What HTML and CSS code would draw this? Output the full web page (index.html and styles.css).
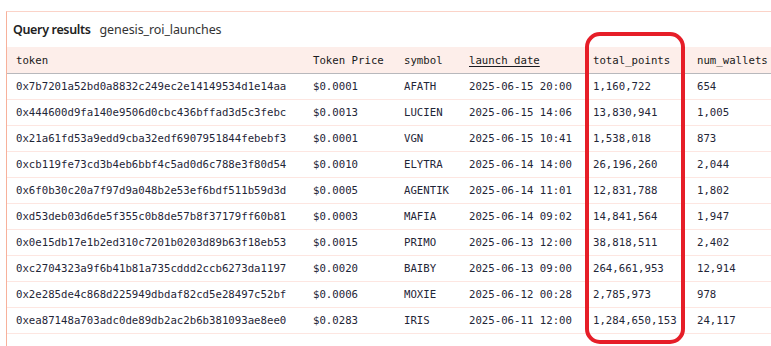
FILE: index.html
```html
<!DOCTYPE html>
<html lang="en">
<head>
    <meta charset="UTF-8">
    <meta name="viewport" content="width=device-width, initial-scale=1.0">
    <title>Query results</title>
    <link rel="stylesheet" href="styles.css">
</head>
<body>
    <div class="panel">
        <div class="panel-title">
            <strong>Query results</strong>
            <span class="query-name">genesis_roi_launches</span>
        </div>

        <table class="results">
            <colgroup>
                <col class="col-token">
                <col class="col-price">
                <col class="col-symbol">
                <col class="col-date">
                <col class="col-points">
                <col class="col-wallets">
            </colgroup>
            <thead>
                <tr>
                    <th>token</th>
                    <th>Token Price</th>
                    <th>symbol</th>
                    <th><span class="sorted">launch_date</span></th>
                    <th>total_points</th>
                    <th>num_wallets</th>
                </tr>
            </thead>
            <tbody>
                <tr><td>0x7b7201a52bd0a8832c249ec2e14149534d1e14aa</td><td>$0.0001</td><td>AFATH</td><td>2025-06-15 20:00</td><td>1,160,722</td><td>654</td></tr>
                <tr><td>0x444600d9fa140e9506d0cbc436bffad3d5c3febc</td><td>$0.0013</td><td>LUCIEN</td><td>2025-06-15 14:06</td><td>13,830,941</td><td>1,005</td></tr>
                <tr><td>0x21a61fd53a9edd9cba32edf6907951844febebf3</td><td>$0.0001</td><td>VGN</td><td>2025-06-15 10:41</td><td>1,538,018</td><td>873</td></tr>
                <tr><td>0xcb119fe73cd3b4eb6bbf4c5ad0d6c788e3f80d54</td><td>$0.0010</td><td>ELYTRA</td><td>2025-06-14 14:00</td><td>26,196,260</td><td>2,044</td></tr>
                <tr><td>0x6f0b30c20a7f97d9a048b2e53ef6bdf511b59d3d</td><td>$0.0005</td><td>AGENTIK</td><td>2025-06-14 11:01</td><td>12,831,788</td><td>1,802</td></tr>
                <tr><td>0xd53deb03d6de5f355c0b8de57b8f37179ff60b81</td><td>$0.0003</td><td>MAFIA</td><td>2025-06-14 09:02</td><td>14,841,564</td><td>1,947</td></tr>
                <tr><td>0x0e15db17e1b2ed310c7201b0203d89b63f18eb53</td><td>$0.0015</td><td>PRIMO</td><td>2025-06-13 12:00</td><td>38,818,511</td><td>2,402</td></tr>
                <tr><td>0xc2704323a9f6b41b81a735cddd2ccb6273da1197</td><td>$0.0020</td><td>BAIBY</td><td>2025-06-13 09:00</td><td>264,661,953</td><td>12,914</td></tr>
                <tr><td>0x2e285de4c868d225949dbdaf82cd5e28497c52bf</td><td>$0.0006</td><td>MOXIE</td><td>2025-06-12 00:28</td><td>2,785,973</td><td>978</td></tr>
                <tr><td>0xea87148a703adc0de89db2ac2b6b381093ae8ee0</td><td>$0.0283</td><td>IRIS</td><td>2025-06-11 12:00</td><td>1,284,650,153</td><td>24,117</td></tr>
            </tbody>
        </table>
    </div>

    <!-- hand-drawn highlight around the total_points column -->
    <div class="highlight"></div>
</body>
</html>
```

FILE: styles.css
```css
body {
    margin: 0;
    padding: 0;
    background-color: #ffffff;
    overflow: hidden;
    font-family: "Noto Sans", "Open Sans", sans-serif;
    color: #1f2430;
}
.panel {
    height: 335px;
    margin: 11px 0 0 6px;
    border-top: 1px solid #fbd3c8;
    border-left: 1.5px solid #f7b19b;
    overflow: hidden;
}
.panel-title {
    height: 35px;
    display: flex;
    align-items: center;
    gap: 9px;
    padding-left: 6px;
    font-size: 12.5px;
    color: #222222;
}
.panel-title strong {
    font-weight: 600;
    letter-spacing: -0.35px;
}
.query-name {
    color: #333333;
    letter-spacing: -0.1px;
}
.results {
    width: 801px;
    border-collapse: collapse;
    table-layout: fixed;
    font-family: "DejaVu Sans Mono", "Liberation Mono", monospace;
    font-size: 10.7px;
}
.col-token { width: 297px; }
.col-price { width: 91px; }
.col-symbol { width: 65px; }
.col-date { width: 124px; }
.col-points { width: 104px; }
.col-wallets { width: 120px; }
.results th {
    height: 26px;
    padding: 0 0 0 9px;
    text-align: left;
    font-weight: normal;
    color: #1a1a20;
    background-color: #fdeeea;
    border-bottom: 1px solid #b8b8bc;
    white-space: nowrap;
}
.results td {
    height: 25px;
    padding: 0 0 0 9px;
    white-space: nowrap;
    color: #1f2638;
    border-bottom: 1px solid #fde6e1;
}
.sorted {
    text-decoration: underline;
    text-underline-offset: 2px;
}
.highlight {
    position: absolute;
    left: 585px;
    top: 32px;
    width: 92px;
    height: 304px;
    border: 4px solid #e61e28;
    border-radius: 15px;
}
```
